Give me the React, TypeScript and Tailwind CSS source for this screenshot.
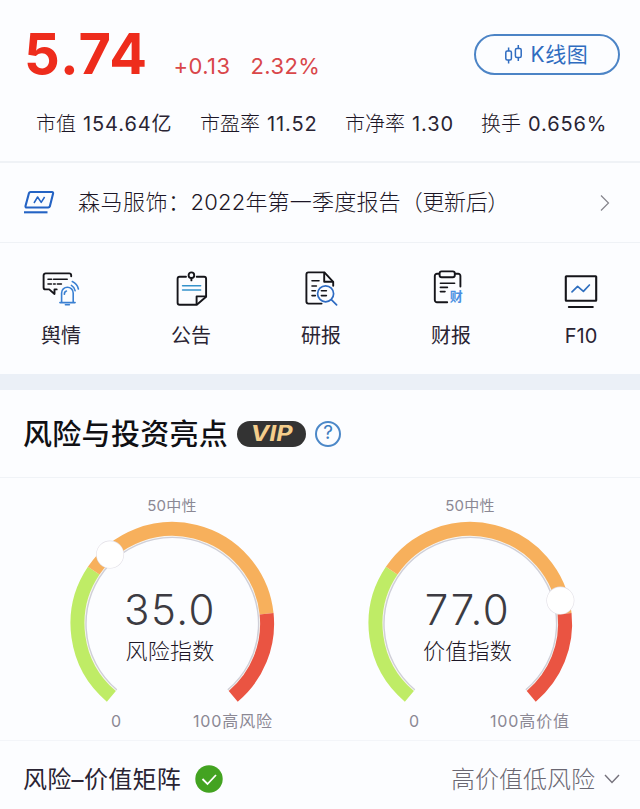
import type { ReactNode } from "react"

interface Stat {
  label: string
  value: string
  className: string
}

const stats: Stat[] = [
  { label: "市值", value: "154.64亿", className: "w-[164px]" },
  { label: "市盈率", value: "11.52", className: "w-[145px]" },
  { label: "市净率", value: "1.30", className: "w-[136px]" },
  { label: "换手", value: "0.656%", className: "w-[130px]" },
]

function KLineIcon() {
  return (
    <svg width="20" height="22" viewBox="0 0 20 22" fill="none" stroke="#2f6cc0" strokeWidth="1.5">
      <rect x="1.8" y="7" width="5.6" height="9" rx="1.5" />
      <path d="M4.6 3.6V7M4.6 16v3.6" />
      <rect x="11.4" y="4.6" width="5.8" height="9" rx="1.5" />
      <path d="M14.3 1v3.6M14.3 13.6v3.4" />
    </svg>
  )
}

function ReportIcon() {
  return (
    <svg
      className="mb-[2px]"
      width="32"
      height="26"
      viewBox="0 0 32 26"
      fill="none"
      stroke="#2463c4"
      strokeWidth="2.1"
      strokeLinejoin="round"
    >
      <path d="M7.6 3h21.4a1.2 1.2 0 0 1 1.1 1.5L26.8 17.4a1.6 1.6 0 0 1-1.5 1.1H3.6a1.2 1.2 0 0 1-1.1-1.5L6 4.1A1.6 1.6 0 0 1 7.6 3z" />
      <path d="M11 14l3.6-6 3.6 5.4L21.6 8" strokeWidth="1.5" />
      <path d="M1 23.3h23.5" />
    </svg>
  )
}

function IconFrame({ children }: { children: ReactNode }) {
  return (
    <svg
      width="44"
      height="44"
      viewBox="0 0 44 44"
      fill="none"
      stroke="#15151a"
      strokeWidth="1.9"
      strokeLinecap="round"
      strokeLinejoin="round"
    >
      {children}
    </svg>
  )
}

function SentimentIcon() {
  return (
    <IconFrame>
      <path d="M32.2 8.2V7.4a2 2 0 0 0-2-2H6.6a2 2 0 0 0-2 2v12a2 2 0 0 0 2 2h3.6l5.3 4.6v-4.6h2.2" />
      <path d="M9 11.3h3.6M14.6 11.3h13.6M9 16h3.4M14.6 16h1.6M18.4 16h4" strokeWidth="1.6" />
      <g stroke="#3a80d2" strokeWidth="1.6">
        <path d="M22.6 34.4V25a5.8 5.8 0 0 1 11.6 0v9.4M20.9 34.6h15.2" />
        <path d="M26.4 36.8h4M25.4 26.3a3 3 0 0 1 2-3.2" />
        <path d="M32.4 17.4a7.6 7.6 0 0 1 3.7 5.2M33.3 13.6a10.8 10.8 0 0 1 6.1 7.4" />
      </g>
    </IconFrame>
  )
}

function NoticeIcon() {
  return (
    <IconFrame>
      <path d="M17 8.7h-6.4a2 2 0 0 0-2 2v24a2 2 0 0 0 2 2h17.2l9.3-8V10.7a2 2 0 0 0-2-2h-7.4" />
      <path d="M27.6 36v-7.6h9" />
      <circle cx="22.4" cy="7.2" r="2.8" />
      <path d="M22.4 10v2.4" />
      <path d="M13.6 17.7h18M13.6 22h18" stroke="#3492cb" strokeWidth="1.6" />
    </IconFrame>
  )
}

function ResearchIcon() {
  return (
    <IconFrame>
      <path d="M22.6 35.6H9.4a2 2 0 0 1-2-2V6.4a2 2 0 0 1 2-2h16l8.8 9.4v4" />
      <path d="M25.2 4.6v9.2h8.6" />
      <path d="M13 12.7h7M13 18h4.4M13 22.8h3.4M13 27.6h3.4M22.4 22.8h5M22.4 27.6h5" strokeWidth="1.6" />
      <g stroke="#2e6bc2">
        <circle cx="26.6" cy="25.8" r="8" strokeWidth="1.7" />
        <path d="M32.6 31.8l5 5" strokeWidth="1.7" />
      </g>
    </IconFrame>
  )
}

function FinanceIcon() {
  return (
    <IconFrame>
      <path d="M10 5.8H8a2.2 2.2 0 0 0-2.2 2.2v24a2.2 2.2 0 0 0 2.2 2.2h10.2M26 5.8h3.2A2.2 2.2 0 0 1 31.4 8v10.6" />
      <rect x="10.6" y="3.4" width="15.2" height="5.8" rx="2" />
      <path d="M11.4 15.3h14.2M11.4 19.4h7M11.4 23.6h4.6" strokeWidth="1.6" />
      <text
        x="27.2"
        y="33"
        textAnchor="middle"
        fill="#4a90e2"
        stroke="none"
        className="font-['Noto_Sans_CJK_SC',sans-serif] text-[13px] font-bold"
      >
        财
      </text>
    </IconFrame>
  )
}

function F10Icon() {
  return (
    <IconFrame>
      <rect x="6.8" y="8.2" width="30.4" height="24.6" rx="0.5" strokeWidth="2.1" />
      <path d="M9.8 39h24" strokeWidth="2" />
      <path d="M13 23.8l5.6-5.4 5.8 5L30.4 17" stroke="#2f6fbf" strokeWidth="1.7" />
    </IconFrame>
  )
}

const shortcuts = [
  { label: "舆情", icon: <SentimentIcon /> },
  { label: "公告", icon: <NoticeIcon /> },
  { label: "研报", icon: <ResearchIcon /> },
  { label: "财报", icon: <FinanceIcon /> },
  { label: "F10", icon: <F10Icon /> },
]

const CX = 105.3
const CY = 105.7
const SWEEP = 280

// 0..100 on the dial to a point, starting at the lower left
function dialPoint(value: number, r: number) {
  const deg = 130 + (value / 100) * SWEEP
  const rad = (deg * Math.PI) / 180
  return { x: CX + r * Math.cos(rad), y: CY + r * Math.sin(rad) }
}

function arc(from: number, to: number, r: number) {
  const a = dialPoint(from, r)
  const b = dialPoint(to, r)
  const large = ((to - from) / 100) * SWEEP > 180 ? 1 : 0
  return `M${a.x} ${a.y}A${r} ${r} 0 ${large} 1 ${b.x} ${b.y}`
}

interface GaugeProps {
  value: number
  name: string
  maxLabel: string
  // nudges the captions towards the left of the dial
  captionClass: string
}

function Gauge({ value, name, maxLabel, captionClass }: GaugeProps) {
  const knob = dialPoint(value, 93)
  return (
    <div className="flex w-[298px] flex-col items-center pt-[16px]">
      <div className="h-6 text-[15px] leading-6 tracking-[0.2px] text-[#8b8894]">50中性</div>
      <div className="relative h-[191px] w-[210px]">
        <svg width="210" height="190" viewBox="0 0 210 190" fill="none">
          <path d={arc(0, 100, 86.6)} stroke="#cfcfd8" strokeWidth="2" />
          <path d={arc(0, 100, 87.6)} stroke="#f7f4ee" strokeWidth="1.2" />
          <path d={arc(0, 30, 94.8)} stroke="#bfec66" strokeWidth="14" />
          <path d={arc(30, 80, 94.8)} stroke="#f7b05c" strokeWidth="14" />
          <path d={arc(80, 100, 94.8)} stroke="#ea5442" strokeWidth="14" />
          <circle cx={knob.x} cy={knob.y} r="14" fill="#e2dfe6" />
          <circle cx={knob.x} cy={knob.y} r="13.4" fill="#ffffff" />
        </svg>
        <div className={`absolute left-0 top-[68px] flex flex-col items-center ${captionClass}`}>
          <div className="text-[42px] font-light leading-[48px] tracking-[1.5px] text-[#3c3b42]">
            {value.toFixed(1)}
          </div>
          <div className="text-[22px] font-light leading-[34px] tracking-[0.2px] text-[#1c1626]">{name}</div>
        </div>
      </div>
      <div className="flex h-6 w-[210px] text-[16px] leading-6 text-[#8b8894]">
        <div className={`flex shrink-0 justify-between pl-[44px] ${captionClass}`}>
          <span>0</span>
          <span className="tracking-[0.9px]">{maxLabel}</span>
        </div>
      </div>
    </div>
  )
}

export default function App() {
  return (
    <div className="h-[809px] w-[640px] overflow-hidden bg-[#fcfdff] font-['Inter','Noto_Sans_CJK_SC',sans-serif] text-[#2a2433]">
      <header className="h-[161px]">
        <div className="flex h-[92px] items-start pl-[24px] pr-[20px]">
          <div className="pt-[20px] text-[56px] font-bold leading-[68px] tracking-[1.4px] text-[#ee2c1c]">5.74</div>
          <div className="flex gap-[20px] pl-[25px] pt-[51px] text-[22px] leading-[30px] tracking-[0.4px] text-[#d9474a]">
            <span>+0.13</span>
            <span>2.32%</span>
          </div>
          <button className="ml-auto mt-[34px] flex h-[41px] w-[146px] items-center justify-center gap-[7px] rounded-full border-2 border-[#4c84c6] pr-[2px] text-[21px] tracking-[0.6px] text-[#2f6cc0]">
            <KLineIcon />
            <span>K线图</span>
          </button>
        </div>
        <div className="flex pl-[36px] pt-[16px] leading-[32px]">
          {stats.map((stat) => (
            <div key={stat.label} className={`flex shrink-0 gap-[7px] whitespace-nowrap text-[20px] ${stat.className}`}>
              <span className="font-light text-[#1c1626]">{stat.label}</span>
              <span className="tracking-[0.9px]">{stat.value}</span>
            </div>
          ))}
        </div>
      </header>

      <div className="flex h-[82px] items-center border-b border-t-2 border-[#eff2f6] pl-[23px] pr-[30px]">
        <ReportIcon />
        <div className="pl-[23px] text-[22px] font-light text-[#1c1626]">
          <span className="tracking-[0.5px]">森马服饰：</span>
          <span className="tracking-[0.2px]">2022年第一季度报告</span>
          <span className="-tracking-[0.4px]">（更新后）</span>
        </div>
        <svg className="ml-auto" width="10" height="18" viewBox="0 0 10 18" fill="none" stroke="#85848c" strokeWidth="1.2">
          <path d="M1 1.5L8.5 9 1 16.5" />
        </svg>
      </div>

      <nav className="flex h-[131px] justify-between pl-[21px] pr-[19px] pt-[25px]">
        {shortcuts.map((item) => (
          <div key={item.label} className="flex w-20 flex-col items-center">
            {item.icon}
            <span className="pt-[8px] text-[20px] leading-[32px]">{item.label}</span>
          </div>
        ))}
      </nav>

      <div className="h-[16px] bg-[#ebf0f7]" />

      <section>
        <div className="flex h-[88px] items-center border-b border-[#f0f3f7] pl-[23px]">
          <h2 className="pt-[2px] text-[29px] font-medium tracking-[0.3px] text-[#101014]">风险与投资亮点</h2>
          <span className="ml-[9px] flex h-[26px] w-[69px] items-center justify-center rounded-full bg-[#333333]">
            <span className="scale-x-[1.2] text-[21px] font-bold italic text-[#f4cd8b]">VIP</span>
          </span>
          <span className="ml-[9px] flex size-[26px] items-center justify-center rounded-full border-2 border-[#4c88c8] text-[19px] text-[#3d7dc0]">
            ?
          </span>
        </div>
        <div className="flex h-[262px] pl-[23px]">
          <Gauge value={35} name="风险指数" maxLabel="100高风险" captionClass="w-[206px]" />
          <Gauge value={77} name="价值指数" maxLabel="100高价值" captionClass="w-[205px]" />
        </div>
      </section>

      <footer className="flex h-[69px] items-center border-t border-[#f3f5f9] pl-[23px] pr-[20px] pt-[8px] text-[24px]">
        <span className="pt-[2px] tracking-[0.3px]">风险–价值矩阵</span>
        <svg className="ml-[14px]" width="28" height="28" viewBox="0 0 28 28" fill="none">
          <circle cx="14" cy="14" r="13.7" fill="#43a321" />
          <path d="M7.5 14l5 5L21 10" stroke="#ffffff" strokeWidth="1.8" />
        </svg>
        <span className="ml-auto pt-[2px] font-light text-[#6a6772]">高价值低风险</span>
        <svg className="ml-[9px]" width="16" height="10" viewBox="0 0 16 10" fill="none" stroke="#75727c" strokeWidth="1.4">
          <path d="M1 1l7 7.5L15 1" />
        </svg>
      </footer>
    </div>
  )
}
